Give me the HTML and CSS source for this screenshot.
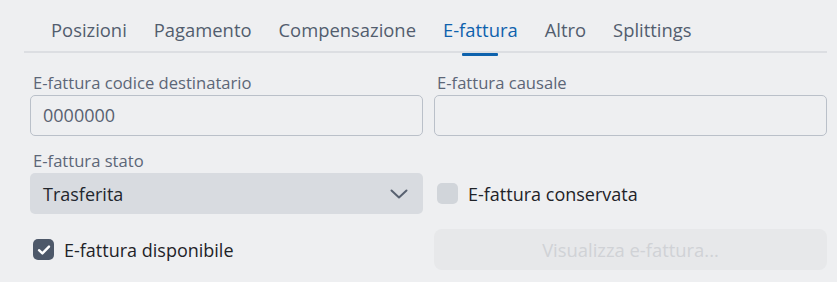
FILE: index.html
```html
<!DOCTYPE html>
<html lang="it">
<head>
<meta charset="utf-8">
<title>E-fattura</title>
<link rel="stylesheet" href="styles.css">
</head>
<body>
<div class="page">
  <nav class="tabs">
    <span class="tab">Posizioni</span>
    <span class="tab">Pagamento</span>
    <span class="tab">Compensazione</span>
    <span class="tab active">E-fattura</span>
    <span class="tab">Altro</span>
    <span class="tab">Splittings</span>
  </nav>
  <div class="form">
    <div class="field">
      <label class="label">E-fattura codice destinatario</label>
      <div class="input">0000000</div>
    </div>
    <div class="field">
      <label class="label">E-fattura causale</label>
      <div class="input"></div>
    </div>
    <div class="field">
      <label class="label">E-fattura stato</label>
      <div class="select">
        <span>Trasferita</span>
        <svg class="chev" width="18" height="10" viewBox="0 0 18 10"><path d="M1.5 1.5 L9 8.5 L16.5 1.5" fill="none" stroke="#586170" stroke-width="2" stroke-linecap="round" stroke-linejoin="round"/></svg>
      </div>
    </div>
    <div class="field bottom">
      <div class="check-row">
        <span class="box"></span>
        <span class="check-text">E-fattura conservata</span>
      </div>
    </div>
    <div class="check-row">
      <span class="box checked">
        <svg width="14" height="12" viewBox="0 0 14 12"><path d="M2 6.2 L5.4 9.4 L12 2.6" fill="none" stroke="#fff" stroke-width="2.4" stroke-linecap="round" stroke-linejoin="round"/></svg>
      </span>
      <span class="check-text">E-fattura disponibile</span>
    </div>
    <div class="button">Visualizza e-fattura...</div>
  </div>
</div>
</body>
</html>
```

FILE: styles.css
```css
html, body {
  margin: 0;
  padding: 0;
  background: #eeeff1;
}
body {
  font-family: "Open Sans", "Noto Sans", sans-serif;
  width: 837px;
  height: 282px;
  overflow: hidden;
}
.page {
  padding: 0 10px 0 24px;
}
.tabs {
  display: flex;
  gap: 27px;
  height: 51px;
  padding-left: 27px;
  border-bottom: 2px solid #dcdee2;
  align-items: center;
}
.tab {
  position: relative;
  font-size: 18.4px;
  color: #525d6e;
  line-height: 24px;
  padding-top: 8px;
}
.tab.active {
  color: #0e62ad;
}
.tab.active::after {
  content: "";
  position: absolute;
  left: 50%;
  margin-left: -18px;
  width: 36px;
  height: 3px;
  bottom: -14px;
  background: #0e62ad;
  border-radius: 1px;
}
.form {
  display: grid;
  grid-template-columns: 393px 393px;
  column-gap: 11px;
  row-gap: 15px;
  padding: 20px 0 0 6px;
}
.field {
  display: flex;
  flex-direction: column;
}
.field.bottom {
  justify-content: flex-end;
}
.label {
  font-size: 16.6px;
  line-height: 20px;
  color: #5c6677;
  margin: 0 0 2px 3px;
}
.input {
  box-sizing: border-box;
  height: 41px;
  border: 1px solid #bac0c9;
  border-radius: 5px;
  padding: 0 12px;
  font-size: 18px;
  line-height: 39px;
  color: #586170;
}
.select {
  box-sizing: border-box;
  height: 41px;
  background: #d8dbe0;
  border-radius: 5px;
  padding: 0 15px 0 13px;
  display: flex;
  align-items: center;
  justify-content: space-between;
  font-size: 18px;
  color: #23272d;
}
.chev {
  display: block;
}
.check-row {
  height: 41px;
  display: flex;
  align-items: center;
  gap: 10px;
  padding-left: 3px;
}
.box {
  width: 21px;
  height: 21px;
  box-sizing: border-box;
  border-radius: 5px;
  background: #d1d5da;
  display: flex;
  align-items: center;
  justify-content: center;
}
.box.checked {
  background: #4d5869;
}
.box svg {
  display: block;
}
.check-text {
  font-size: 18px;
  color: #1f2328;
}
.button {
  height: 41px;
  border-radius: 8px;
  background: #e7e8ea;
  color: #d0d2d6;
  font-size: 18.4px;
  display: flex;
  align-items: center;
  justify-content: center;
}
```
